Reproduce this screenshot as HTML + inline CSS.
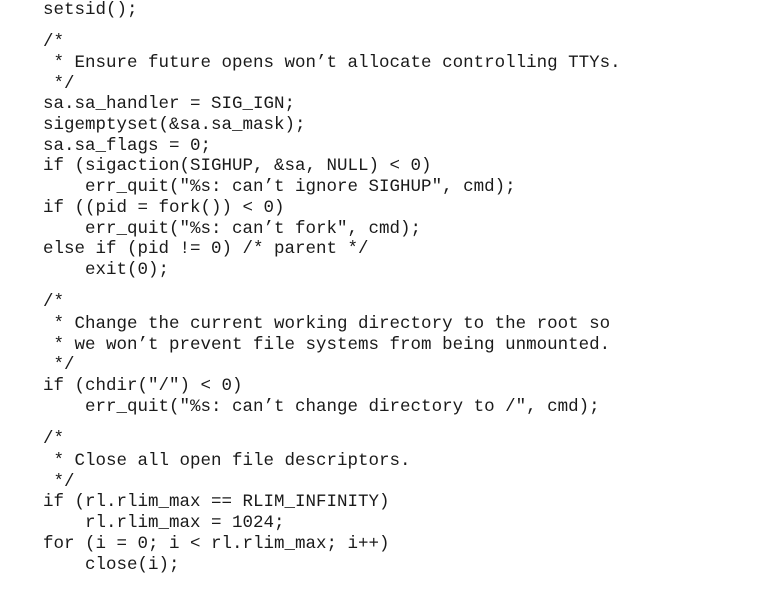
<!DOCTYPE html>
<html><head><meta charset="utf-8"><style>
html,body{margin:0;padding:0;background:#fff;width:760px;height:590px;overflow:hidden}
.l{position:absolute;left:43px;height:21px;line-height:21px;font-family:"Liberation Mono",monospace;font-size:17.5px;color:#1a1a1a;white-space:pre}
</style></head><body>
<div class="l" style="top:0px">setsid();</div>
<div class="l" style="top:32px">/*</div>
<div class="l" style="top:53px"> * Ensure future opens won’t allocate controlling TTYs.</div>
<div class="l" style="top:74px"> */</div>
<div class="l" style="top:94px">sa.sa_handler = SIG_IGN;</div>
<div class="l" style="top:115px">sigemptyset(&amp;sa.sa_mask);</div>
<div class="l" style="top:136px">sa.sa_flags = 0;</div>
<div class="l" style="top:156px">if (sigaction(SIGHUP, &amp;sa, NULL) &lt; 0)</div>
<div class="l" style="top:177px">    err_quit("%s: can’t ignore SIGHUP", cmd);</div>
<div class="l" style="top:198px">if ((pid = fork()) &lt; 0)</div>
<div class="l" style="top:219px">    err_quit("%s: can’t fork", cmd);</div>
<div class="l" style="top:239px">else if (pid != 0) /* parent */</div>
<div class="l" style="top:260px">    exit(0);</div>
<div class="l" style="top:292px">/*</div>
<div class="l" style="top:314px"> * Change the current working directory to the root so</div>
<div class="l" style="top:335px"> * we won’t prevent file systems from being unmounted.</div>
<div class="l" style="top:355px"> */</div>
<div class="l" style="top:376px">if (chdir("/") &lt; 0)</div>
<div class="l" style="top:397px">    err_quit("%s: can’t change directory to /", cmd);</div>
<div class="l" style="top:429px">/*</div>
<div class="l" style="top:451px"> * Close all open file descriptors.</div>
<div class="l" style="top:472px"> */</div>
<div class="l" style="top:492px">if (rl.rlim_max == RLIM_INFINITY)</div>
<div class="l" style="top:513px">    rl.rlim_max = 1024;</div>
<div class="l" style="top:534px">for (i = 0; i &lt; rl.rlim_max; i++)</div>
<div class="l" style="top:555px">    close(i);</div>
</body></html>
